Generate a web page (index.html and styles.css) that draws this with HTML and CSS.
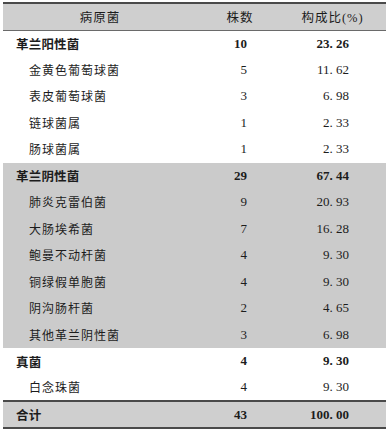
FILE: index.html
```html
<!DOCTYPE html>
<html lang="zh">
<head>
<meta charset="utf-8">
<title>病原菌构成</title>
<link rel="stylesheet" href="styles.css">
</head>
<body>
<table class="tbl">
  <colgroup>
    <col class="c-name">
    <col class="c-num">
    <col class="c-pct">
  </colgroup>
  <thead>
    <tr class="head">
      <th class="h-name">病原菌</th>
      <th class="h-num">株数</th>
      <th class="h-pct">构成比(%)</th>
    </tr>
  </thead>
  <tbody>
    <tr class="grp"><td class="name">革兰阳性菌</td><td class="num">10</td><td class="pct">23. 26</td></tr>
    <tr><td class="name sub">金黄色葡萄球菌</td><td class="num">5</td><td class="pct">11. 62</td></tr>
    <tr><td class="name sub">表皮葡萄球菌</td><td class="num">3</td><td class="pct">6. 98</td></tr>
    <tr><td class="name sub">链球菌属</td><td class="num">1</td><td class="pct">2. 33</td></tr>
    <tr><td class="name sub">肠球菌属</td><td class="num">1</td><td class="pct">2. 33</td></tr>
    <tr class="grp shade"><td class="name">革兰阴性菌</td><td class="num">29</td><td class="pct">67. 44</td></tr>
    <tr class="shade"><td class="name sub">肺炎克雷伯菌</td><td class="num">9</td><td class="pct">20. 93</td></tr>
    <tr class="shade"><td class="name sub">大肠埃希菌</td><td class="num">7</td><td class="pct">16. 28</td></tr>
    <tr class="shade"><td class="name sub">鲍曼不动杆菌</td><td class="num">4</td><td class="pct">9. 30</td></tr>
    <tr class="shade"><td class="name sub">铜绿假单胞菌</td><td class="num">4</td><td class="pct">9. 30</td></tr>
    <tr class="shade"><td class="name sub">阴沟肠杆菌</td><td class="num">2</td><td class="pct">4. 65</td></tr>
    <tr class="shade"><td class="name sub">其他革兰阴性菌</td><td class="num">3</td><td class="pct">6. 98</td></tr>
    <tr class="grp"><td class="name">真菌</td><td class="num">4</td><td class="pct">9. 30</td></tr>
    <tr><td class="name sub">白念珠菌</td><td class="num">4</td><td class="pct">9. 30</td></tr>
    <tr class="grp total"><td class="name">合计</td><td class="num">43</td><td class="pct">100. 00</td></tr>
  </tbody>
</table>
</body>
</html>
```

FILE: styles.css
```css
html, body {
  margin: 0;
  padding: 0;
  background: #ffffff;
}

body {
  padding: 2px 2px 0 3px;
  font-family: "Liberation Serif", "Noto Sans CJK SC", serif;
  color: #1c1c1c;
}

.tbl {
  width: 383px;
  border-collapse: collapse;
  table-layout: fixed;
  font-size: 13px;
}

.c-name { width: 194px; }
.c-num { width: 86px; }
.c-pct { width: 103px; }

.head {
  height: 27px;
  background: #cfcfcf;
  border-top: 2px solid #4a4a4a;
  border-bottom: 1px solid #6a6a6a;
}

.head th {
  font-weight: normal;
  font-size: 12.5px;
  letter-spacing: 1px;
  padding: 0;
  vertical-align: middle;
}

.h-name { text-align: center; }
.h-num { text-align: center; }
.h-pct { text-align: center; padding-right: 4px !important; }

tbody tr {
  height: 26.5px;
}

td {
  padding: 0;
  vertical-align: middle;
  white-space: nowrap;
}

.name {
  padding-left: 13px;
  font-size: 12px;
  letter-spacing: 1px;
}

.name.sub {
  padding-left: 26px;
}

.grp .name {
  font-weight: bold;
  font-size: 12.5px;
  letter-spacing: 0.2px;
}

.num {
  text-align: right;
  padding-right: 36px;
}

.pct {
  text-align: right;
  padding-right: 37px;
}

.grp .num,
.grp .pct {
  font-weight: bold;
}

.shade {
  background: #cbcbcb;
}

.total {
  height: 27px;
  background: #cfcfcf;
  border-top: 2px solid #4a4a4a;
  border-bottom: 2px solid #4a4a4a;
}
```
